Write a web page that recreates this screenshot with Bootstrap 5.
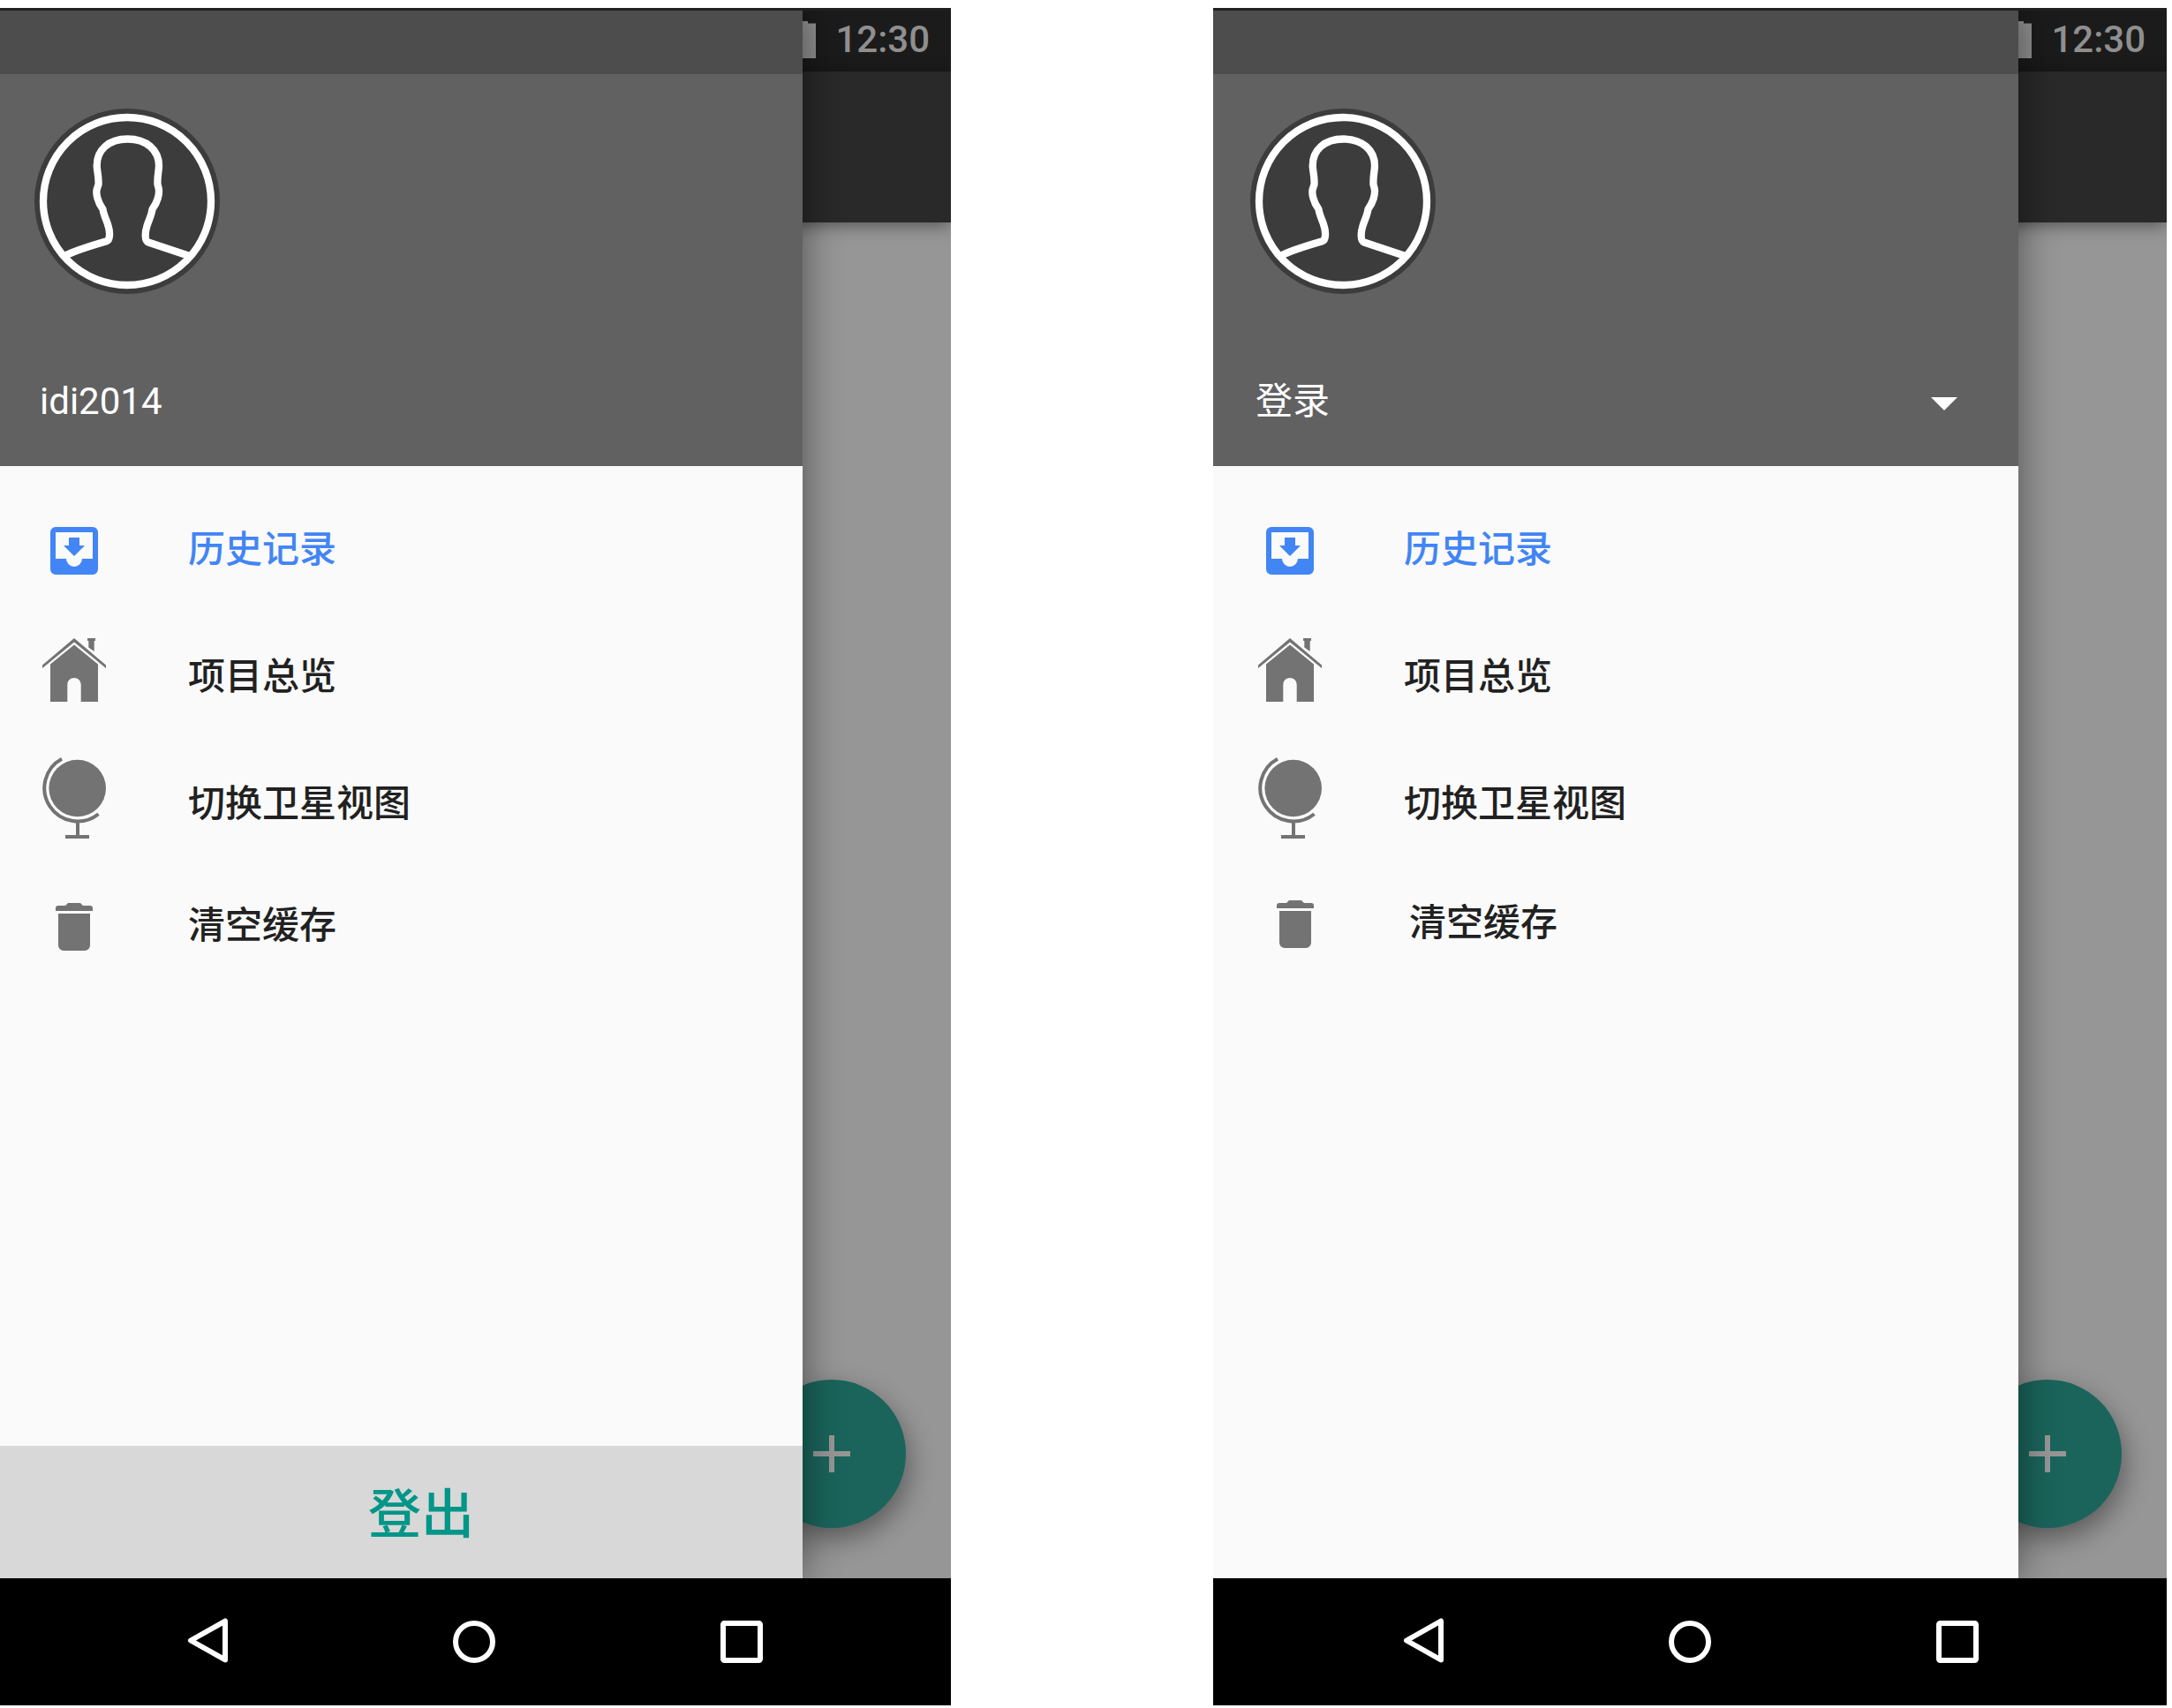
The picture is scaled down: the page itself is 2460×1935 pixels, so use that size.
<!DOCTYPE html>
<html lang="zh-CN">
<head>
<meta charset="utf-8">
<meta name="viewport" content="width=device-width, initial-scale=1">
<title>导航抽屉</title>
<link href="https://cdn.jsdelivr.net/npm/bootstrap@5.3.0/dist/css/bootstrap.min.css" rel="stylesheet">
<style>
  body { background: #fff; font-family: Roboto, "Noto Sans CJK SC", sans-serif; font-size: 42px; line-height: 60px; }
  .board { min-height: 100vh; gap: 297px; padding: 9px 6px 3px 0; overflow: hidden; }
  .phone { flex: 1 1 0; min-width: 0; border-top: 3px solid #202020; }
  /* the first device runs slightly off the edge of the board */
  .phone-first { margin-left: -3px; }

  .app { background: #969696; }
  .status { height: 69px; background: #1b1b1b; color: #8f8f8f; padding: 0 24px 3px 0; gap: 22px; font-weight: 500; }
  .toolbar { height: 171px; background: #292929; box-shadow: 0 3px 18px rgba(0,0,0,.45); }
  .fab { right: 51px; bottom: 57px; width: 168px; height: 168px; background: #1a645b; color: #969696; box-shadow: 3px 12px 30px rgba(0,0,0,.4); }

  .drawer { width: calc(100% - 168px); background: #fafafa; box-shadow: 3px 0 39px rgba(0,0,0,.42); }
  .drawer-strip { height: 72px; background: #4d4d4d; }
  .account { background: #616161; color: #fff; padding: 39px 69px 43px 48px; }
  .avatar { margin: 0 0 88px -6px; }
  .drawer-label { padding-top: 4px; }
  .menu { padding: 21px 51px 0; }
  .menu .nav-link { height: 144px; gap: 93px; color: #212121; font-weight: 500; }
  .menu .nav-link.active { color: #4285f4; }
  .menu svg { color: #737373; }
  .menu .active svg { color: #4285f4; }
  .menu .row-short { height: 132px; }
  .menu .row-inset { height: 126px; padding-left: 6px !important; }
  .logout { height: 150px; background: #d8d8d8; color: #009688; font-size: 60px; font-weight: 500; padding: 8px 0 0 48px; }
  .sysbar { height: 144px; background: #000; color: #fff; padding: 0 210px; }
  svg { display: block; flex: none; }
</style>
<script src="https://cdn.jsdelivr.net/npm/bootstrap@5.3.0/dist/js/bootstrap.bundle.min.js"></script>
</head>
<body>
<svg class="d-none" aria-hidden="true">
  <symbol id="i-person" viewBox="0 0 210 210">
    <circle cx="105" cy="105" r="105" fill="#3c3c3c"/>
    <g fill="none" stroke="#fff" stroke-width="8.3">
      <circle cx="105" cy="105" r="95"/>
      <path stroke-linejoin="round" d="M34 167C48 160 62 156 81 150.500C84 149.500 85 147 85 143.500C86 132 79 125 77.500 114C72 107 69 96 71 90.500L72.500 86C73 77 71 72 70.700 65C70.500 47 84 34.500 105.500 34.500C127 34.500 141 47 141 65C140.700 72 139 77 139.500 86L140.700 90.500C142 97 139 107 133.500 114C132 125 125.500 132 125.700 143.500C125.700 147 126 150.500 129 151.500L177 167.500"/>
    </g>
  </symbol>
  <symbol id="i-inbox" viewBox="0 0 72 108">
    <path fill="currentColor" fill-rule="evenodd" d="M15 30H57a6 6 0 0 1 6 6V78a6 6 0 0 1-6 6H15a6 6 0 0 1-6-6V36a6 6 0 0 1 6-6ZM15 36V66H27a9 9 0 0 0 18 0H57V36ZM30 42H42V51H48L36 63L24 51H30Z"/>
  </symbol>
  <symbol id="i-house" viewBox="0 0 72 108">
    <path fill="currentColor" d="M0 42.500L36 12L72 42.500V46L36 16.500L0 46ZM36 19.500L63 41.500V84H43.700V65C43.700 60 40.500 57 36 57S28.300 60 28.300 65V84H9V41.500ZM51 12H60V15H58.700V27L52.300 22.500V15H51Z"/>
  </symbol>
  <symbol id="i-globe" viewBox="0 0 72 108">
    <circle cx="39.700" cy="38" r="32.300" fill="currentColor"/>
    <path fill="none" stroke="currentColor" stroke-width="4" d="M22 4.700A37.700 37.700 0 1 0 63.500 67.300M40 76V92M26 93H53"/>
  </symbol>
  <symbol id="i-trash" viewBox="0 0 72 108">
    <path fill="currentColor" d="M15 39V36a3 3 0 0 1 3-3H26L29 30H43L46 33H54a3 3 0 0 1 3 3V39ZM18 42H54V78a6 6 0 0 1-6 6H24a6 6 0 0 1-6-6Z"/>
  </symbol>
  <symbol id="i-battery" viewBox="0 0 27 42">
    <path fill="currentColor" d="M9 0H18V2.500H27V42H0V2.500H9Z"/>
  </symbol>
  <symbol id="i-plus" viewBox="0 0 42 42">
    <path fill="currentColor" d="M18 0H24V18H42V24H24V42H18V24H0V18H18Z"/>
  </symbol>
  <symbol id="i-back" viewBox="0 0 54 54">
    <path fill="none" stroke="currentColor" stroke-width="6" stroke-linejoin="round" d="M48 3.500V47.500L9 25.500Z"/>
  </symbol>
  <symbol id="i-home" viewBox="0 0 54 54">
    <circle cx="27" cy="27" r="21" fill="none" stroke="currentColor" stroke-width="6"/>
  </symbol>
  <symbol id="i-recent" viewBox="0 0 54 54">
    <rect x="6" y="6" width="42" height="42" rx="1.500" fill="none" stroke="currentColor" stroke-width="6"/>
  </symbol>
</svg>

<main class="board d-flex">
  <section class="phone phone-first d-flex flex-column">
    <div class="app position-relative overflow-hidden flex-grow-1">
      <div class="status d-flex align-items-center justify-content-end">
        <svg width="27" height="42"><use href="#i-battery"/></svg>
        <time>12:30</time>
      </div>
      <header class="toolbar"></header>
      <button class="fab btn rounded-circle border-0 p-0 position-absolute d-flex align-items-center justify-content-center" type="button" aria-label="添加">
        <svg width="42" height="42"><use href="#i-plus"/></svg>
      </button>
      <aside class="drawer position-absolute top-0 bottom-0 start-0 d-flex flex-column">
        <div class="drawer-strip"></div>
        <div class="account">
          <svg class="avatar" width="210" height="210"><use href="#i-person"/></svg>
          <div class="d-flex align-items-center justify-content-between">
            <span class="drawer-label">idi2014</span>
          </div>
        </div>
        <nav class="menu nav flex-column flex-nowrap flex-grow-1">
          <a class="nav-link active p-0 d-flex align-items-center" href="#"><svg width="72" height="108"><use href="#i-inbox"/></svg><span class="drawer-label">历史记录</span></a>
          <a class="nav-link p-0 d-flex align-items-center" href="#"><svg width="72" height="108"><use href="#i-house"/></svg><span class="drawer-label">项目总览</span></a>
          <a class="nav-link p-0 d-flex align-items-center" href="#"><svg width="72" height="108"><use href="#i-globe"/></svg><span class="drawer-label">切换卫星视图</span></a>
          <a class="nav-link row-short p-0 d-flex align-items-center" href="#"><svg width="72" height="108"><use href="#i-trash"/></svg><span class="drawer-label">清空缓存</span></a>
        </nav>
        <button class="logout btn rounded-0 border-0" type="button">登出</button>
      </aside>
    </div>
    <footer class="sysbar d-flex align-items-center justify-content-between">
      <button class="btn p-0 border-0 text-reset" type="button" aria-label="返回"><svg width="54" height="54"><use href="#i-back"/></svg></button>
      <button class="btn p-0 border-0 text-reset" type="button" aria-label="主页"><svg width="54" height="54"><use href="#i-home"/></svg></button>
      <button class="btn p-0 border-0 text-reset" type="button" aria-label="最近"><svg width="54" height="54"><use href="#i-recent"/></svg></button>
    </footer>
  </section>

  <section class="phone d-flex flex-column">
    <div class="app position-relative overflow-hidden flex-grow-1">
      <div class="status d-flex align-items-center justify-content-end">
        <svg width="27" height="42"><use href="#i-battery"/></svg>
        <time>12:30</time>
      </div>
      <header class="toolbar"></header>
      <button class="fab btn rounded-circle border-0 p-0 position-absolute d-flex align-items-center justify-content-center" type="button" aria-label="添加">
        <svg width="42" height="42"><use href="#i-plus"/></svg>
      </button>
      <aside class="drawer position-absolute top-0 bottom-0 start-0 d-flex flex-column">
        <div class="drawer-strip"></div>
        <div class="account">
          <svg class="avatar" width="210" height="210"><use href="#i-person"/></svg>
          <div class="d-flex align-items-center justify-content-between">
            <span class="drawer-label">登录</span>
            <button class="btn p-0 border-0 text-reset" type="button" aria-label="切换账号"><svg width="30" height="24" viewBox="0 0 30 24"><path fill="currentColor" d="M0 9H30L15 24Z"/></svg></button>
          </div>
        </div>
        <nav class="menu nav flex-column flex-nowrap flex-grow-1">
          <a class="nav-link active p-0 d-flex align-items-center" href="#"><svg width="72" height="108"><use href="#i-inbox"/></svg><span class="drawer-label">历史记录</span></a>
          <a class="nav-link p-0 d-flex align-items-center" href="#"><svg width="72" height="108"><use href="#i-house"/></svg><span class="drawer-label">项目总览</span></a>
          <a class="nav-link p-0 d-flex align-items-center" href="#"><svg width="72" height="108"><use href="#i-globe"/></svg><span class="drawer-label">切换卫星视图</span></a>
          <a class="nav-link row-inset p-0 d-flex align-items-center" href="#"><svg width="72" height="108"><use href="#i-trash"/></svg><span class="drawer-label">清空缓存</span></a>
        </nav>
      </aside>
    </div>
    <footer class="sysbar d-flex align-items-center justify-content-between">
      <button class="btn p-0 border-0 text-reset" type="button" aria-label="返回"><svg width="54" height="54"><use href="#i-back"/></svg></button>
      <button class="btn p-0 border-0 text-reset" type="button" aria-label="主页"><svg width="54" height="54"><use href="#i-home"/></svg></button>
      <button class="btn p-0 border-0 text-reset" type="button" aria-label="最近"><svg width="54" height="54"><use href="#i-recent"/></svg></button>
    </footer>
  </section>
</main>
</body>
</html>
